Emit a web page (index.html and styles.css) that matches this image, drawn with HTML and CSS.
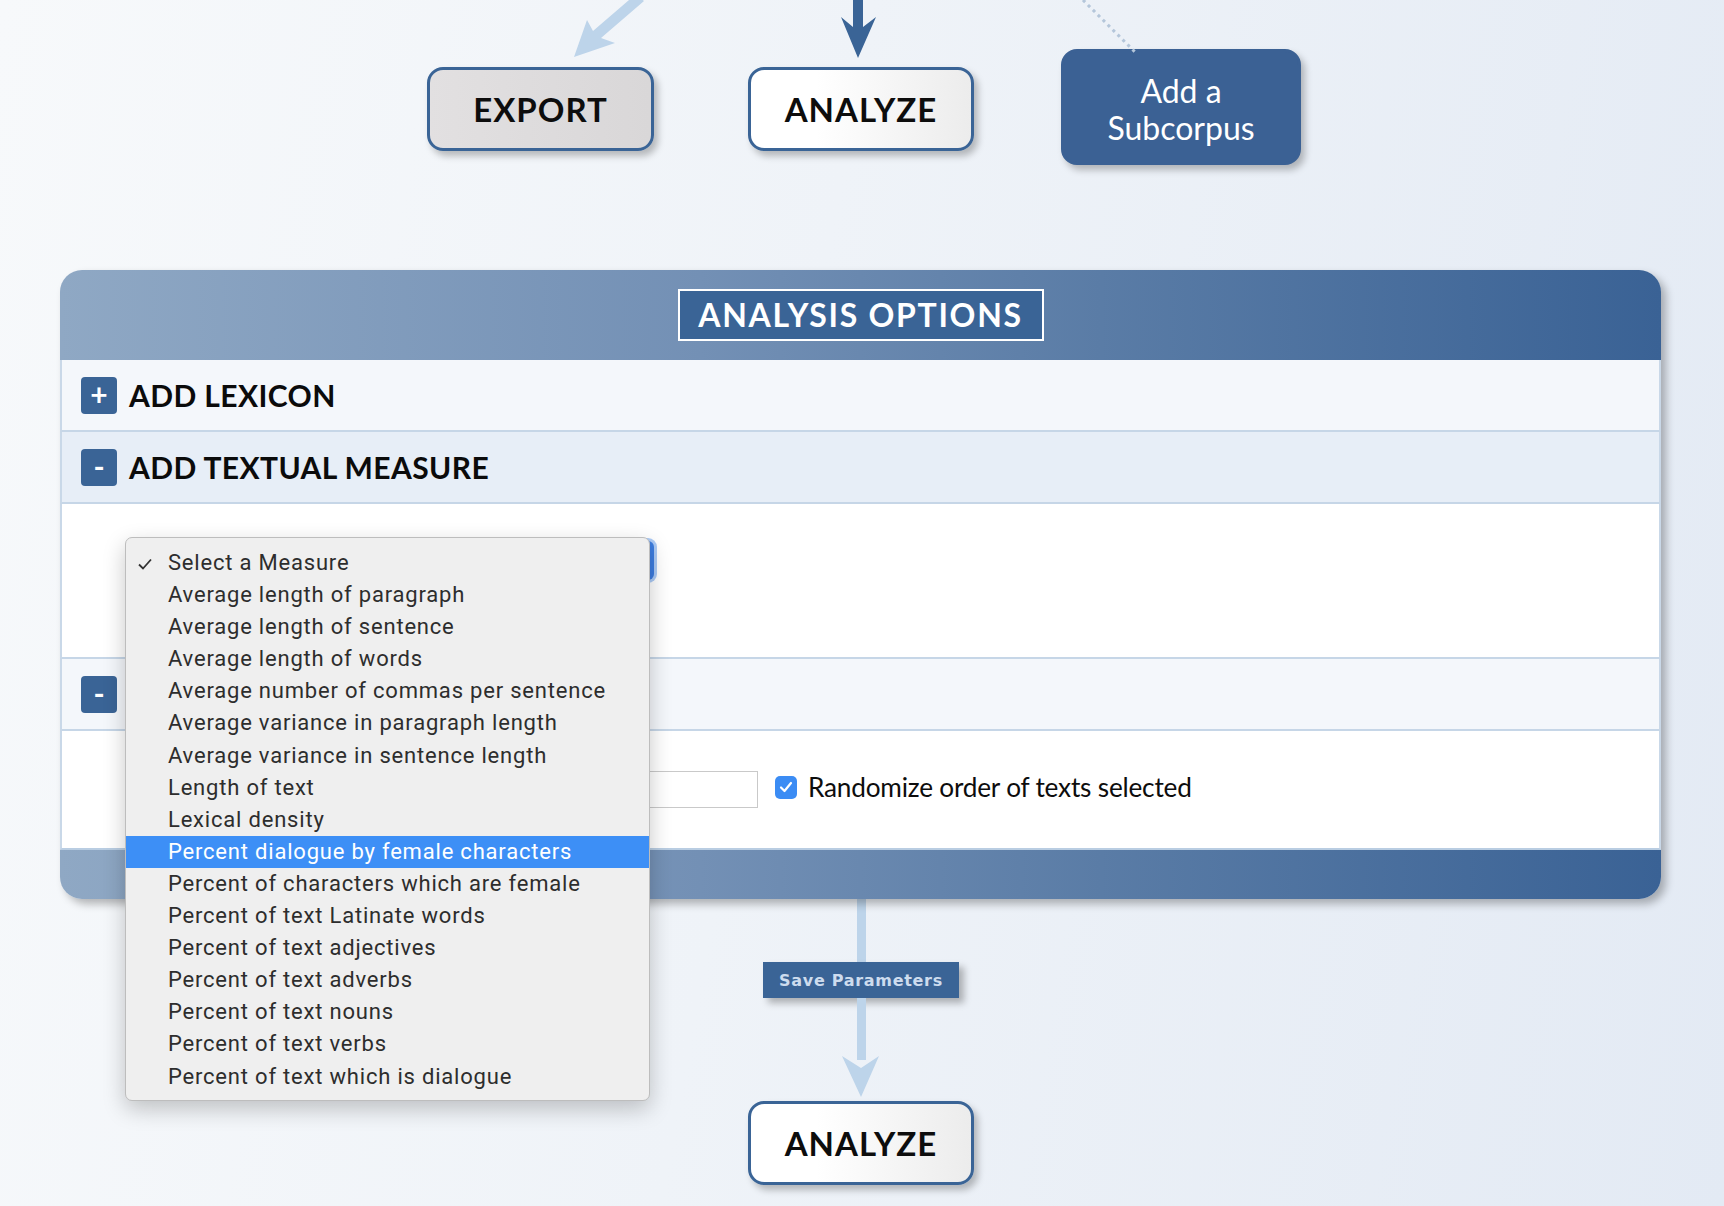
FILE: index.html
```html
<!DOCTYPE html>
<html lang="en">
<head>
<meta charset="utf-8">
<title>Analysis Options</title>
<link rel="stylesheet" href="styles.css">
</head>
<body>
<div class="page">
  <section class="flow-top">
    <svg class="connectors" width="1724" height="270" viewBox="0 0 1724 270">
      <polygon fill="#bdd4ea" points="574,57 587,20 593,31 636,-6 644,1 601,38 615,43"/>
      <path fill="#3a6496" d="M853,-2 V27 L841,17 L858,58 L876,17 L863,27 V-2 Z"/>
      <line x1="1083" y1="0" x2="1135" y2="52" stroke="#b4c6da" stroke-width="3" stroke-dasharray="3 4"/>
    </svg>
    <div class="node-row">
      <button class="node node-export">EXPORT</button>
      <button class="node node-analyze">ANALYZE</button>
      <button class="node node-sub">Add a<br>Subcorpus</button>
    </div>
  </section>

  <section class="panel">
    <header class="panel-head">
      <h2 class="panel-title">ANALYSIS OPTIONS</h2>
    </header>
    <div class="row row-light">
      <span class="toggle">+</span>
      <span class="row-label">ADD LEXICON</span>
    </div>
    <div class="row row-blue">
      <span class="toggle">-</span>
      <span class="row-label">ADD TEXTUAL MEASURE</span>
    </div>
    <div class="row-body measure-body">
      <div class="select-box"></div>
      <ul class="menu">
        <li class="menu-item checked"><svg class="check" width="16" height="14" viewBox="0 0 16 14"><polyline points="2,7.5 6,11.5 14,2.5" fill="none" stroke="#333" stroke-width="1.8"/></svg>Select a Measure</li>
        <li class="menu-item">Average length of paragraph</li>
        <li class="menu-item">Average length of sentence</li>
        <li class="menu-item">Average length of words</li>
        <li class="menu-item">Average number of commas per sentence</li>
        <li class="menu-item">Average variance in paragraph length</li>
        <li class="menu-item">Average variance in sentence length</li>
        <li class="menu-item">Length of text</li>
        <li class="menu-item">Lexical density</li>
        <li class="menu-item active">Percent dialogue by female characters</li>
        <li class="menu-item">Percent of characters which are female</li>
        <li class="menu-item">Percent of text Latinate words</li>
        <li class="menu-item">Percent of text adjectives</li>
        <li class="menu-item">Percent of text adverbs</li>
        <li class="menu-item">Percent of text nouns</li>
        <li class="menu-item">Percent of text verbs</li>
        <li class="menu-item">Percent of text which is dialogue</li>
      </ul>
    </div>
    <div class="row row-light">
      <span class="toggle">-</span>
    </div>
    <div class="row-body params-body">
      <input class="text-input" type="text">
      <label class="check-label">
        <span class="checkbox"><svg width="14" height="12" viewBox="0 0 14 12"><polyline points="2,6.5 5.5,10 12,2" fill="none" stroke="#fff" stroke-width="2.2" stroke-linecap="round" stroke-linejoin="round"/></svg></span>
        Randomize order of texts selected
      </label>
    </div>
    <footer class="panel-foot"></footer>
  </section>

  <section class="flow-bottom">
    <div class="wire wire-a"></div>
    <button class="save-btn">Save Parameters</button>
    <div class="wire wire-b"></div>
    <svg class="wire-head" width="38" height="42" viewBox="0 0 38 42"><path fill="#bdd4ea" d="M0,0 L19,12 L37,0 L19,41 Z"/></svg>
    <button class="node node-analyze node-bottom">ANALYZE</button>
  </section>
</div>
</body>
</html>
```

FILE: styles.css
```css
* { box-sizing: border-box; }

html, body {
  margin: 0;
  padding: 0;
}

body {
  width: 1724px;
  height: 1206px;
  overflow: hidden;
  background: linear-gradient(100deg, #f7f9fb 0%, #eff3f8 45%, #e3eaf4 100%);
  font-family: "Lato", "Liberation Sans", sans-serif;
  color: #111;
}

.page {
  width: 1724px;
}

/* ---------- top flow ---------- */
.flow-top {
  position: relative;
  height: 270px;
}

.connectors {
  position: absolute;
  left: 0;
  top: 0;
}

.node-row {
  display: flex;
  align-items: flex-start;
  padding-left: 427px;
  padding-top: 49px;
}

.node {
  font-family: "Lato", sans-serif;
  font-weight: 700;
  font-size: 33px;
  letter-spacing: 1px;
  border: 3px solid #3a6496;
  border-radius: 16px;
  box-shadow: 4px 5px 7px rgba(0, 0, 0, 0.25);
  color: #0d0d0d;
  padding: 0;
  cursor: pointer;
}

.node-export {
  width: 227px;
  height: 84px;
  margin-top: 18px;
  background: linear-gradient(to right, #e2e0e1, #d9d7d8);
}

.node-analyze {
  width: 226px;
  height: 84px;
  margin-top: 18px;
  margin-left: 94px;
  background: linear-gradient(to right, #ffffff 30%, #ececec);
}

.node-sub {
  width: 240px;
  height: 116px;
  margin-left: 87px;
  background: #3b6194;
  border-color: #3b6194;
  color: #fff;
  font-weight: 400;
  font-size: 32px;
  letter-spacing: 0;
  line-height: 37px;
  padding-top: 4px;
}

/* ---------- panel ---------- */
.panel {
  margin-left: 60px;
  width: 1601px;
  border-radius: 22px;
  box-shadow: 5px 5px 9px rgba(0, 0, 0, 0.28);
  position: relative;
  z-index: 1;
}

.panel-head {
  height: 90px;
  border-radius: 22px 22px 0 0;
  background: linear-gradient(to right, #8fa8c4 0%, #7390b5 40%, #5a7ca6 65%, #3a6295 100%);
  display: flex;
  justify-content: center;
  align-items: flex-start;
  padding-top: 19px;
}

.panel-title {
  margin: 0;
  width: 366px;
  height: 52px;
  border: 2px solid #ffffff;
  background: #3a6496;
  color: #fff;
  font-family: "Lato", sans-serif;
  font-weight: 700;
  font-size: 32px;
  letter-spacing: 1.7px;
  line-height: 48px;
  text-align: center;
}

.row {
  height: 72px;
  display: flex;
  align-items: center;
  padding-left: 19px;
  border-left: 2px solid #c9d8e8;
  border-right: 2px solid #c9d8e8;
  border-bottom: 2px solid #c6d6e7;
}

.row-light { background: #f4f7fb; }
.row-blue { background: #e7eef7; }

.toggle {
  width: 36px;
  height: 37px;
  border-radius: 4px;
  background: #3a6496;
  color: #fff;
  font-family: "Lato", sans-serif;
  font-weight: 700;
  font-size: 30px;
  line-height: 35px;
  text-align: center;
  margin-right: 12px;
  flex: none;
}

.row-label {
  font-family: "Lato", sans-serif;
  font-weight: 700;
  font-size: 30px;
  letter-spacing: 0.4px;
  color: #0b0b0b;
}

.row-body {
  background: #ffffff;
  border-left: 2px solid #c9d8e8;
  border-right: 2px solid #c9d8e8;
  border-bottom: 2px solid #c6d6e7;
}

.measure-body {
  height: 155px;
  position: relative;
  padding: 37px 0 0 68px;
}

.select-box {
  width: 524px;
  height: 39px;
  border-radius: 6px;
  background: #3d7de0;
  box-shadow: 0 0 0 3px rgba(104, 160, 238, 0.55);
}

.menu {
  position: absolute;
  left: 63px;
  top: 33px;
  z-index: 5;
  margin: 0;
  padding: 9px 0 7px;
  list-style: none;
  width: 525px;
  background: #efefef;
  border: 1px solid #bdbdbd;
  border-radius: 7px;
  box-shadow: 0 8px 22px rgba(0, 0, 0, 0.22);
  overflow: hidden;
}

.menu-item {
  position: relative;
  height: 32.1px;
  line-height: 32px;
  padding-left: 42px;
  font-family: "Roboto", "Noto Sans", sans-serif;
  font-size: 22px;
  letter-spacing: 0.8px;
  color: #2d2d2d;
  white-space: nowrap;
}

.menu-item.active {
  background: #3d8ff6;
  color: #ffffff;
}

.check {
  position: absolute;
  left: 11px;
  top: 10px;
}

.params-body {
  height: 119px;
  display: flex;
  align-items: center;
  padding-left: 408px;
  padding-bottom: 5px;
  border-bottom: 2px solid #b9cde2;
}

.text-input {
  width: 288px;
  height: 37px;
  border: 1px solid #c9c9c9;
  background: #fff;
  margin: 4px 17px 0 0;
  padding: 0;
}

.check-label {
  display: flex;
  align-items: center;
  font-family: "Lato", sans-serif;
  font-size: 26.2px;
  color: #0d0d0d;
  letter-spacing: -0.2px;
}

.checkbox {
  width: 22px;
  height: 23px;
  border-radius: 5px;
  background: #3b8cf4;
  display: flex;
  align-items: center;
  justify-content: center;
  margin-right: 11px;
}

.panel-foot {
  height: 49px;
  border-radius: 0 0 22px 22px;
  background: linear-gradient(to right, #8fa8c4 0%, #7390b5 40%, #5a7ca6 65%, #3a6295 100%);
}

/* ---------- bottom flow ---------- */
.flow-bottom {
  display: flex;
  flex-direction: column;
  align-items: center;
  padding-left: 0;
  width: 1722px;
}

.wire {
  width: 9px;
  background: #bdd4ea;
}

.wire-a { height: 63px; }
.wire-b { height: 62px; }

.save-btn {
  width: 196px;
  height: 36px;
  border: 0;
  padding: 0;
  background: #3a6496;
  color: #cddcee;
  font-family: "DejaVu Sans", sans-serif;
  font-weight: 700;
  font-size: 16px;
  letter-spacing: 0.7px;
  box-shadow: 5px 5px 7px rgba(0, 0, 0, 0.28);
}

.wire-head {
  display: block;
  margin-top: -4px;
}

.node-bottom {
  margin: 3px 0 0 0;
}
```
